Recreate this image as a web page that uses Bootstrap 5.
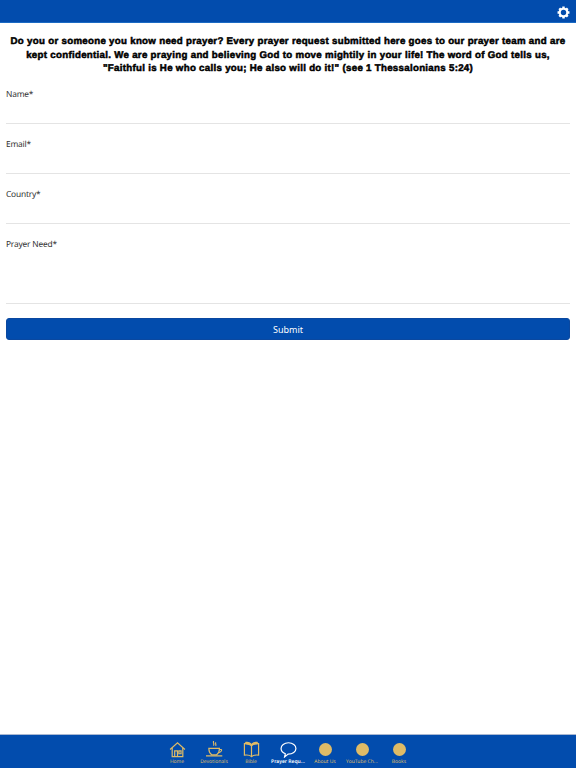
<!DOCTYPE html>
<html lang="en">

<head>
	<meta charset="UTF-8" />
	<meta name="viewport" content="width=device-width, initial-scale=1" />
	<title>Prayer Request</title>
	<link href="https://cdn.jsdelivr.net/npm/bootstrap@5.3.0/dist/css/bootstrap.min.css" rel="stylesheet" />
	<style>
		:root {
		  --brand: #024cad;
		  --gold: #dfbb66;
		}

		html, body {
		  height: 100%;
		}

		body {
		  font-family: "Noto Sans", "Open Sans", sans-serif;
		  color: #333;
		  background: #fff;
		  text-rendering: geometricPrecision;
		}

		.page-wrap {
		  height: 768px;
		}

		.top-bar {
		  height: 23px;
		  background: var(--brand);
		  border-bottom: 1px solid #1a6ac4;
		  padding-right: 6px;
		  padding-top: 2px;
		}

		.intro-text {
		  font-family: "Liberation Sans", Arial, sans-serif;
		  font-weight: 700;
		  font-size: 9.7px;
		  line-height: 13.5px;
		  letter-spacing: 0.3px;
		  color: #000;
		  -webkit-text-stroke: 0.5px #000;
		  height: 51px;
		  padding: 12px 6px 0;
		  margin: 0;
		}

		.form-area {
		  padding: 0 6px;
		}

		.field-box {
		  height: 50px;
		  border-bottom: 1px solid #e4e4e4;
		  padding-top: 14px;
		  font-size: 8.4px;
		  letter-spacing: -0.2px;
		  line-height: 13px;
		}

		.field-box.tall {
		  height: 80px;
		}

		.submit-btn {
		  --bs-btn-bg: var(--brand);
		  --bs-btn-border-color: #0a48a0;
		  --bs-btn-hover-bg: var(--brand);
		  --bs-btn-color: #fff;
		  --bs-btn-hover-color: #fff;
		  --bs-btn-border-radius: 3px;
		  --bs-btn-font-size: 9px;
		  --bs-btn-padding-y: 0;
		  height: 22px;
		  line-height: 21px;
		  margin-top: 14px;
		}

		.tab-bar {
		  height: 34px;
		  background: var(--brand);
		  border-top: 1px solid #a9b8d2;
		}

		.tab-item {
		  width: 37px;
		  height: 33px;
		  padding-top: 6px;
		  font-size: 5px;
		  line-height: 7px;
		  color: var(--gold);
		  white-space: nowrap;
		}

		.tab-item.active-tab {
		  color: #fff;
		  font-weight: 600;
		}

		.tab-icon {
		  width: 17px;
		  height: 17px;
		  display: block;
		  margin-bottom: 1px;
		}

		.tab-dot {
		  width: 13px;
		  height: 13px;
		  border-radius: 50%;
		  background: var(--gold);
		  margin: 2px 0 3px;
		}
	</style>
</head>

<body>
	<div class="page-wrap d-flex flex-column">
		<header class="top-bar d-flex justify-content-end align-items-center">
			<svg width="13" height="13" viewBox="0 0 24 24" aria-hidden="true">
				<g fill="none" stroke="#fff">
					<circle cx="12" cy="12" r="7" stroke-width="4" />
					<path stroke-width="4.5" d="M12 1v4M12 19v4M1 12h4M19 12h4M4.200 4.200l2.900 2.900M16.900 16.900l2.900 2.900M19.800 4.200l-2.900 2.900M7.100 16.900l-2.900 2.900" />
				</g>
			</svg>
		</header>

		<p class="intro-text text-center">Do you or someone you know need prayer? Every prayer request submitted here goes to our prayer team and are kept confidential. We are praying and believing God to move mightily in your life! The word of God tells us, "Faithful is He who calls you; He also will do it!" (see 1 Thessalonians 5:24)</p>

		<form class="form-area">
			<div class="field-box">Name*</div>
			<div class="field-box">Email*</div>
			<div class="field-box">Country*</div>
			<div class="field-box tall">Prayer Need*</div>
			<button type="button" class="btn submit-btn w-100 d-block">Submit</button>
		</form>

		<nav class="tab-bar mt-auto d-flex justify-content-center">
			<div class="tab-item d-flex flex-column align-items-center">
				<svg class="tab-icon" viewBox="0 0 24 24" fill="none" stroke="#dfbb66" stroke-width="1.7" aria-hidden="true">
					<path d="M1.500 12 12 2.500 22.500 12" />
					<path d="M4.500 10v12h15V10" />
					<path d="M8 22v-8h4v8M14 14h3v4h-3z" />
				</svg>
				Home
			</div>
			<div class="tab-item d-flex flex-column align-items-center">
				<svg class="tab-icon" viewBox="0 0 24 24" fill="none" stroke="#dfbb66" stroke-width="1.6" aria-hidden="true">
					<path d="M11 0c-2 2 1.500 3.500-.5 6.500M14 2c-1.500 1.500 1 3-.5 5" />
					<path d="M4 10.500h15c0 4.500-2 7.500-4 9H8c-2-1.500-4-4.500-4-9z" />
					<path d="M19 12h2.500c1 0 1 3-3.500 4.500M0 21h23" />
				</svg>
				Devotionals
			</div>
			<div class="tab-item d-flex flex-column align-items-center">
				<svg class="tab-icon" viewBox="0 0 24 24" fill="none" stroke="#dfbb66" stroke-width="1.7" aria-hidden="true">
					<path d="M12 6C10 3.500 6 3 2 3.500V20c4-.5 8 0 10 2 2-2 6-2.500 10-2V3.500C18 3 14 3.500 12 6z" />
					<path d="M12 6v16" />
					<path fill="#dfbb66" d="M4 2c3-.5 6 0 8 3 2-3 5-3.500 8-3v2c-3 0-6 .5-8 2.500C10 4.500 7 4 4 4z" />
				</svg>
				Bible
			</div>
			<div class="tab-item active-tab d-flex flex-column align-items-center">
				<svg class="tab-icon" viewBox="0 0 24 24" fill="none" stroke="#fff" stroke-width="1.7" aria-hidden="true">
					<path d="M12 2.500C6 2.500 1.500 6 1.500 10.500c0 3.500 2.500 6 6 7.500l-1 4.500 5-4c6.500 0 11-3.500 11-8S18 2.500 12 2.500z" />
				</svg>
				Prayer Requ...
			</div>
			<div class="tab-item d-flex flex-column align-items-center">
				<div class="tab-dot"></div>
				About Us
			</div>
			<div class="tab-item d-flex flex-column align-items-center">
				<div class="tab-dot"></div>
				YouTube Ch...
			</div>
			<div class="tab-item d-flex flex-column align-items-center">
				<div class="tab-dot"></div>
				Books
			</div>
		</nav>
	</div>

	<script src="https://cdn.jsdelivr.net/npm/bootstrap@5.3.0/dist/js/bootstrap.bundle.min.js"></script>
</body>

</html>
